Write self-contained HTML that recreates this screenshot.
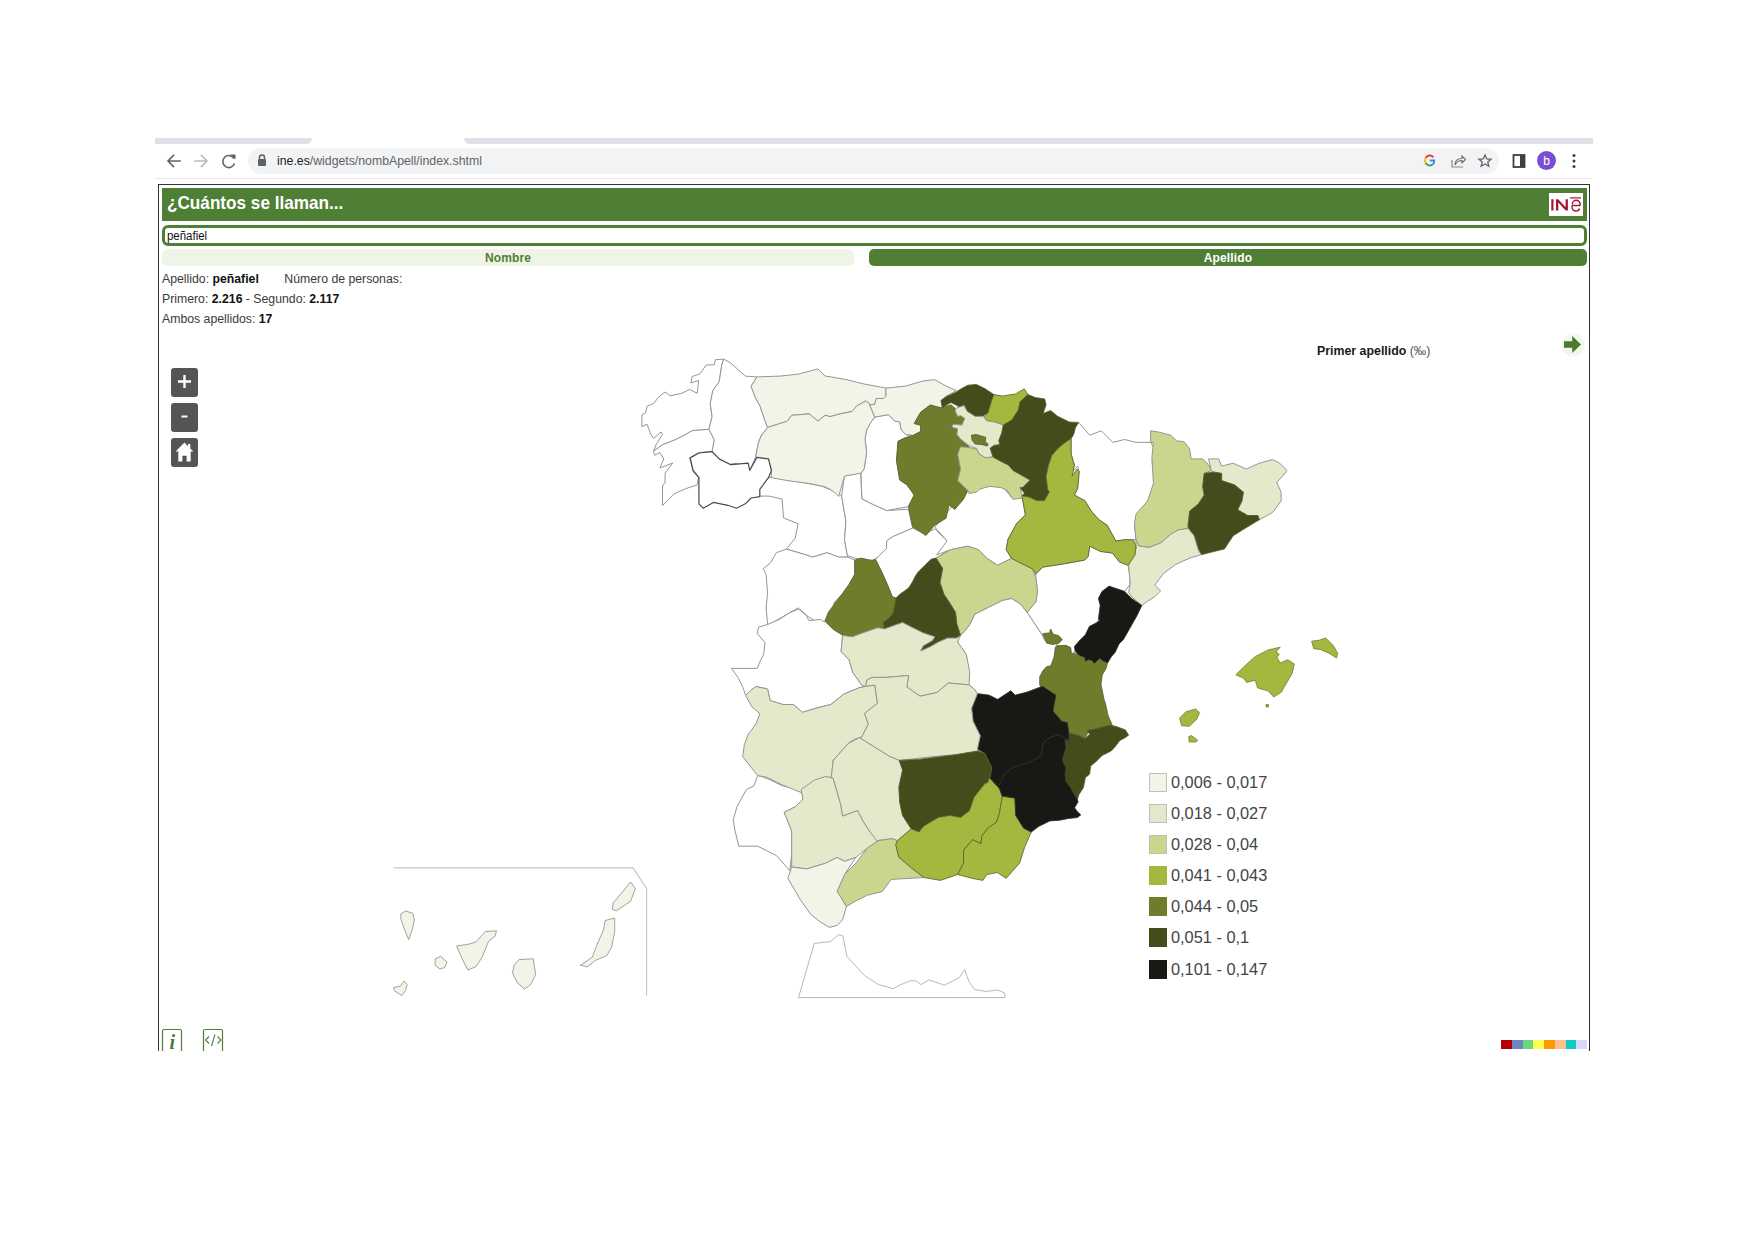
<!DOCTYPE html>
<html><head><meta charset="utf-8">
<style>
html,body{margin:0;padding:0;background:#fff;}
body{width:1754px;height:1240px;position:relative;overflow:hidden;font-family:"Liberation Sans",sans-serif;}
.abs{position:absolute;}
.tabbar{left:155px;top:138px;height:6px;background:#dee1e6;}
.sep{left:155px;top:178px;width:1437px;height:1px;background:#e3e6ea;}
.pill{left:248px;top:148px;width:1251px;height:26px;background:#f1f3f4;border-radius:13px;}
.url{left:276.5px;top:152px;font-size:13px;color:#5f6368;line-height:18px;transform:scaleX(0.945);transform-origin:0 0;white-space:nowrap;}
.url b{font-weight:normal;color:#202124;}
.frame{left:158px;top:184px;width:1432px;height:867px;border:1px solid #333;border-bottom:none;box-sizing:border-box;}
.header{left:162px;top:188px;width:1425px;height:33px;background:#4f7f34;}
.title{left:166.5px;top:191px;font-size:19px;font-weight:bold;color:#fff;line-height:24px;transform:scaleX(0.903);transform-origin:0 0;white-space:nowrap;}
.logo{left:1549px;top:193px;width:34px;height:23px;background:#fff;}
.input{left:162px;top:225px;width:1425px;height:21px;border:3px solid #4f7f34;border-radius:6px;box-sizing:border-box;}
.inputtxt{left:166.5px;top:229px;font-size:12px;color:#111;line-height:14px;transform:scaleX(0.955);transform-origin:0 0;}
.tabN{left:162px;top:249px;width:692px;height:17px;background:#eef5e6;border-radius:5px;}
.tabA{left:869px;top:249px;width:718px;height:17px;background:#4f7f34;border-radius:5px;}
.tabtxt{font-size:12px;font-weight:bold;line-height:17px;text-align:center;top:250px;letter-spacing:0.15px;}
.info{left:162px;font-size:12px;color:#3a3a3a;line-height:16px;transform:scaleX(1.022);transform-origin:0 0;white-space:nowrap;}
.info b{color:#111;}
.zbtn{left:171px;width:27px;height:29px;background:#555;border-radius:3px;color:#fff;}
.legtxt{left:1171px;font-size:16.5px;color:#444;line-height:18px;transform:translateY(0.2px) scaleX(0.99);transform-origin:0 0;white-space:nowrap;}
.sw{left:1149px;width:18px;height:19px;box-sizing:border-box;border:1px solid #c0c0b8;}
.map{position:absolute;left:0;top:0;}
</style></head><body>
<div class="abs tabbar" style="width:157px;border-bottom-right-radius:6px"></div>
<div class="abs tabbar" style="left:464px;width:1129px;border-bottom-left-radius:6px"></div>
<div class="abs sep"></div>
<div class="abs pill"></div>
<!-- nav icons -->
<svg class="abs" style="left:160px;top:148px" width="90" height="26" viewBox="0 0 90 26">
 <g fill="none" stroke-width="1.6" stroke-linecap="square">
  <path d="M20 13 H8.5 M13.5 7.5 L8 13 L13.5 18.5" stroke="#5f6368"/>
  <path d="M35 13 H46.5 M41.5 7.5 L47 13 L41.5 18.5" stroke="#b8babd"/>
  <path d="M74 10.5 A6 6 0 1 0 74.5 15.5" stroke="#5f6368" stroke-linecap="butt"/>
 </g>
 <path d="M70.5 6.5 L75.5 6.5 L75.5 11.5 Z" fill="#5f6368"/>
</svg>
<svg class="abs" style="left:256px;top:153px" width="12" height="14" viewBox="0 0 12 14">
 <path d="M3.5 6 V4.5 A2.5 2.5 0 0 1 8.5 4.5 V6" fill="none" stroke="#5f6368" stroke-width="1.5"/>
 <rect x="2" y="6" width="8" height="7" rx="1" fill="#5f6368"/>
</svg>
<div class="abs url"><b>ine.es</b>/widgets/nombApell/index.shtml</div>
<!-- right icons -->
<svg class="abs" style="left:1420px;top:148px" width="170" height="26" viewBox="0 0 170 26">
 <g fill="none" stroke-width="1.9">
  <path d="M13.4 9.3 A4.6 4.6 0 0 0 5.6 10.2" stroke="#ea4335"/>
  <path d="M5.6 10.2 A4.6 4.6 0 0 0 5.6 14.8" stroke="#fbbc05"/>
  <path d="M5.6 14.8 A4.6 4.6 0 0 0 12.9 16.3" stroke="#34a853"/>
  <path d="M12.9 16.3 A4.6 4.6 0 0 0 14.2 12.5 H9.8" stroke="#4285f4"/>
 </g>
 <g fill="none" stroke="#5f6368" stroke-width="1.3">
  <path d="M32 12 V19 H43" stroke="#8a8d91" stroke-width="1.2"/>
  <path d="M35 17 C35 12 38 10.5 42 10.5 V8 L45.5 11.5 L42 15 V12.5 C39 12.5 36.5 14 35 17 Z" stroke="#6a6d71" stroke-width="1.1"/>
  <path d="M65 7 L66.8 11 L71 11.3 L67.8 14 L68.8 18.2 L65 16 L61.2 18.2 L62.2 14 L59 11.3 L63.2 11 Z"/>
 </g>
 <rect x="93.5" y="7" width="11" height="12" fill="none" stroke="#3c4043" stroke-width="1.8"/>
 <rect x="100" y="7" width="4.5" height="12" fill="#3c4043"/>
 <circle cx="126.5" cy="12.5" r="9.5" fill="#7a4fcf"/>
 <text x="126.5" y="17" font-size="12" fill="#fff" text-anchor="middle" font-family="Liberation Sans">b</text>
 <circle cx="154" cy="7.5" r="1.5" fill="#3c4043"/><circle cx="154" cy="13" r="1.5" fill="#3c4043"/><circle cx="154" cy="18.5" r="1.5" fill="#3c4043"/>
</svg>
<div class="abs frame"></div>
<div class="abs header"></div>
<div class="abs title">¿Cuántos se llaman...</div>
<div class="abs logo"></div>
<svg class="abs" style="left:1549px;top:193px" width="34" height="23" viewBox="0 0 34 23">
 <rect x="2.3" y="6.2" width="2.2" height="11.3" fill="#a3173a"/>
 <path d="M7 17.5 V6.2 H9.2 L16.6 14 V6.2 H18.9 V17.5 H16.7 L9.3 9.6 V17.5 Z" fill="#a3173a"/>
 <path d="M31.3 12.6 H23.3 A3.9 3.9 0 0 0 30.6 15.6 M23.3 11.3 A3.9 3.9 0 0 1 31.2 11.3 V12.6" fill="none" stroke="#a3173a" stroke-width="1.5"/>
 <rect x="21" y="4.3" width="11" height="1.2" fill="#a3173a"/>
</svg>
<div class="abs input"></div>
<div class="abs inputtxt">peñafiel</div>
<div class="abs tabN"></div>
<div class="abs tabA"></div>
<div class="abs tabtxt" style="left:162px;width:692px;color:#4f7f34">Nombre</div>
<div class="abs tabtxt" style="left:869px;width:718px;color:#fff">Apellido</div>
<div class="abs info" style="top:271px">Apellido: <b>peñafiel</b><span style="display:inline-block;width:25px"></span>Número de personas:</div>
<div class="abs info" style="top:291px">Primero: <b>2.216</b> - Segundo: <b>2.117</b></div>
<div class="abs info" style="top:311px">Ambos apellidos: <b>17</b></div>
<div class="abs" style="left:1317px;top:343px;font-size:12px;font-weight:bold;color:#1a1a1a;line-height:16px;transform:scaleX(1.03);transform-origin:0 0;white-space:nowrap">Primer apellido <span style="font-weight:normal;color:#555">(‰)</span></div>
<svg class="abs" style="left:1559px;top:331px" width="28" height="28" viewBox="0 0 28 28">
 <circle cx="14" cy="14" r="11.5" fill="#f1f7ec"/>
 <path d="M5 10.3 H13.2 V5 L22 13.5 L13.2 22 V16.7 H5 Z" fill="#4a7a2e"/>
</svg>
<!-- zoom buttons -->
<div class="abs zbtn" style="top:368px"></div>
<div class="abs zbtn" style="top:403px"></div>
<div class="abs zbtn" style="top:438px"></div>
<svg class="abs" style="left:171px;top:368px" width="27" height="100" viewBox="0 0 27 100">
 <path d="M13.5 7 V20 M7 13.5 H20" stroke="#fff" stroke-width="2.4"/>
 <path d="M10.5 48.5 H16.5" stroke="#fff" stroke-width="2"/>
 <path d="M13.5 74.6 L4.6 83.6 H7.3 V93.4 H11.4 V87.8 H15.6 V93.4 H19.7 V83.6 H22.4 L19.3 80.5 V76 H17 V78.2 Z" fill="#fff"/>
</svg>
<svg class="map" width="1754" height="1240" viewBox="0 0 1754 1240">
<g stroke-linejoin="round" fill-rule="evenodd">
<polygon points="723.7,359.1 715.4,359.7 714.1,364.9 706.3,364.9 699.9,373.9 692.2,376.5 690.9,383.0 698.6,380.4 697.3,393.3 689.6,389.4 681.8,393.3 670.2,395.8 665.1,392.0 658.6,397.1 653.5,403.6 647.0,406.2 645.7,412.6 641.9,415.2 641.9,426.8 647.0,424.2 650.9,434.5 653.5,438.4 661.2,431.9 662.5,434.5 656.0,444.8 653.5,451.3 662.5,444.8 675.4,439.7 685.7,434.5 692.2,430.6 708.9,429.4 712.1,416.5 710.2,403.6 712.8,390.7 719.2,381.7 721.8,364.9" fill="#ffffff" stroke="#969696" stroke-width="1.0"/>
<polygon points="723.7,359.1 730.8,363.0 745.3,376.1 756.9,376.9 751.1,386.3 755.5,397.9 760.0,406.0 764.6,419.6 767.5,427.5 761.0,436.0 758.4,442.9 755.5,457.4 749.7,470.5 736.6,463.2 727.9,464.7 719.2,459.0 712.1,451.3 714.1,439.7 708.9,429.4 712.1,416.5 710.2,403.6 712.8,390.7 719.2,381.7 721.8,364.9" fill="#ffffff" stroke="#969696" stroke-width="1.0"/>
<polygon points="653.5,451.3 662.5,444.8 675.4,439.7 685.7,434.5 692.2,430.6 708.9,429.4 714.1,439.7 712.1,451.3 698.6,452.6 689.6,457.7 693.4,471.9 698.6,477.1 697.3,484.8 685.7,488.7 674.1,493.8 662.5,505.4 662.5,486.1 665.1,482.2 665.1,473.2 672.8,462.9 659.9,468.0 663.8,459.0 659.9,452.6 654.8,455.1" fill="#ffffff" stroke="#969696" stroke-width="1.0"/>
<polygon points="1078.4,422.4 1089.7,435.2 1101.3,430.8 1112.9,442.4 1124.5,439.5 1136.1,442.4 1150.6,442.4 1155.0,449.7 1152.1,461.3 1155.0,478.7 1150.6,496.1 1143.4,507.7 1136.1,516.4 1134.7,526.6 1136.1,539.7 1133.2,539.7 1124.5,539.7 1115.8,541.1 1107.1,525.1 1098.4,519.3 1091.3,511.1 1084.8,500.6 1080.0,498.2 1074.4,495.0 1077.6,488.5 1079.2,471.6 1077.6,466.0 1072.7,471.6 1074.4,465.2 1071.1,453.9 1071.1,438.5 1073.5,434.5 1075.2,428.1" fill="#ffffff" stroke="#969696" stroke-width="1.0"/>
<polygon points="874.7,417.1 888.4,414.7 894.8,421.1 899.7,421.9 901.3,430.0 906.1,434.8 912.6,435.6 904.5,438.1 898.0,441.3 896.5,460.6 899.7,480.0 906.9,484.8 914.2,495.0 908.4,506.6 886.6,510.6 873.5,504.8 861.9,499.0 861.0,473.5 864.2,468.7 866.6,452.6 865.0,438.9 866.6,430.0 870.6,422.7" fill="#ffffff" stroke="#969696" stroke-width="1.0"/>
<polygon points="771.9,477.3 798.1,481.6 821.3,486.0 838.7,493.2 841.6,496.1 845.9,520.8 844.5,539.7 847.4,555.6 847.4,557.1 838.7,557.1 827.1,552.7 812.6,557.1 803.9,554.2 786.4,549.1 795.2,538.2 798.1,523.7 783.5,517.9 782.1,499.0 769.0,496.1 758.9,496.1 758.9,488.9 769.0,477.3" fill="#ffffff" stroke="#969696" stroke-width="1.0"/>
<polygon points="841.6,496.1 844.5,475.8 860.5,472.9 861.9,499.0 873.5,504.8 886.6,510.6 908.4,509.2 912.7,528.1 892.4,536.8 886.6,541.1 886.6,548.4 877.9,557.1 873.5,560.0 864.8,560.0 856.1,558.5 847.4,555.6 844.5,539.7 845.9,520.8" fill="#ffffff" stroke="#969696" stroke-width="1.0"/>
<polygon points="786.4,549.1 803.9,554.2 812.6,557.1 827.1,552.7 838.7,557.1 847.4,557.1 854.7,560.0 854.7,574.5 848.9,584.7 841.6,594.8 834.3,602.1 832.9,609.3 828.5,612.2 824.2,622.4 816.9,622.4 808.2,616.6 798.1,607.9 780.6,618.0 767.6,625.3 764.7,626.7 767.6,623.8 766.1,607.9 767.6,593.4 766.1,574.5 763.2,568.7 770.5,562.9 776.3,552.7" fill="#ffffff" stroke="#969696" stroke-width="1.0"/>
<polygon points="875.5,559.4 879.3,555.6 886.6,548.4 886.6,541.1 892.4,536.8 912.7,528.1 924.4,534.0 934.8,528.8 947.0,541.0 952.2,547.9 936.1,558.1 931.0,559.4 924.5,565.8 918.1,572.3 915.5,576.1 912.9,581.3 909.0,587.7 903.9,591.6 900.0,594.2 896.1,598.1 892.3,596.8 887.1,583.9 881.9,572.3" fill="#ffffff" stroke="#969696" stroke-width="1.0"/>
<polygon points="957.5,480.0 976.6,487.0 995.8,485.2 1004.5,488.7 1011.5,497.4 1021.9,495.7 1025.4,514.8 1016.7,523.5 1008.0,539.2 1006.2,549.7 1011.5,558.4 997.5,565.3 987.1,558.4 978.4,549.7 967.9,546.2 950.5,549.7 936.6,554.9 947.0,541.0 934.8,527.0 943.5,516.6 952.2,506.1 967.9,490.4" fill="#ffffff" stroke="#969696" stroke-width="1.0"/>
<polygon points="1035.8,574.0 1042.8,567.1 1065.4,563.6 1084.6,560.1 1088.1,556.6 1089.8,546.2 1100.3,551.4 1112.5,553.1 1119.4,561.9 1128.1,565.3 1129.9,575.8 1129.9,584.5 1124.7,591.5 1109.0,586.2 1102.0,591.5 1098.5,598.4 1100.3,605.4 1098.5,619.3 1097.1,622.6 1089.4,626.5 1085.5,634.8 1079.0,641.3 1074.5,646.5 1075.2,651.0 1071.3,654.2 1070.6,647.7 1066.1,645.5 1057.7,645.8 1055.2,647.7 1041.1,633.3 1027.1,612.4 1035.8,601.9 1037.6,591.5 1035.8,577.5" fill="#ffffff" stroke="#969696" stroke-width="1.0"/>
<polygon points="731.5,668.4 741.8,668.4 757.3,668.4 759.8,661.9 763.7,654.2 765.0,642.6 757.3,633.5 758.5,627.1 767.6,624.5 779.2,619.4 789.5,612.9 798.5,609.0 806.3,615.5 808.9,620.6 820.5,619.4 824.4,621.9 825.2,621.3 832.9,629.0 843.2,635.5 842.4,637.4 841.1,651.6 848.9,659.4 852.7,672.3 861.8,685.2 865.6,686.5 859.2,687.7 843.7,694.2 830.8,704.5 815.3,708.4 802.4,712.3 793.4,704.5 783.1,704.5 770.2,700.6 767.6,689.0 756.0,686.5 750.8,690.3 745.6,695.5 743.1,687.7 737.9,677.4" fill="#ffffff" stroke="#969696" stroke-width="1.0"/>
<polygon points="761.5,776.4 770.9,780.2 782.3,785.8 801.1,789.6 803.0,799.1 795.5,806.6 784.2,812.3 791.7,831.1 791.7,853.8 789.8,870.8 776.6,855.7 757.7,846.2 738.9,846.2 735.1,831.1 733.2,819.8 737.0,806.6 746.4,789.6 754.0,785.8 757.7,775.5" fill="#ffffff" stroke="#969696" stroke-width="1.0"/>
<polygon points="969.7,624.5 974.9,614.1 988.8,607.1 1002.8,600.2 1011.5,598.4 1020.2,603.6 1027.1,612.4 1041.1,633.3 1044.5,640.2 1049.8,643.7 1058.5,643.7 1056.7,643.7 1055.8,647.3 1054.4,654.5 1051.4,664.7 1044.2,669.0 1039.8,676.3 1042.7,686.4 1038.4,687.9 1026.8,692.3 1015.2,695.2 1010.8,690.8 997.7,699.5 989.0,695.2 977.4,693.7 974.5,689.4 967.3,683.5 968.7,671.9 966.2,654.2 957.5,642.0 959.2,635.0 964.4,631.5" fill="#ffffff" stroke="#969696" stroke-width="1.0"/>
<polygon points="756.9,376.9 780.1,376.1 799.0,374.0 817.9,368.9 825.1,376.1 830.0,376.7 848.0,380.0 864.2,384.0 886.0,388.1 886.0,396.1 883.5,398.5 876.3,398.5 874.7,404.2 869.8,405.0 869.0,403.4 865.8,401.0 856.9,405.8 852.1,411.5 840.0,413.9 830.0,416.6 825.1,415.3 817.9,421.1 809.2,413.9 791.7,415.3 787.4,421.1 767.5,427.5 764.6,419.6 760.0,406.0 755.5,397.9 751.1,386.3" fill="#f1f4e6" stroke="#969696" stroke-width="1.0"/>
<polygon points="767.5,427.5 787.4,421.1 791.7,415.3 809.2,413.9 817.9,421.1 825.1,415.3 830.0,416.6 840.0,413.9 852.1,411.5 856.9,405.8 865.8,401.0 869.0,403.4 869.8,405.0 874.7,417.1 870.6,422.7 866.6,430.0 865.0,438.9 866.6,452.6 864.2,468.7 861.0,473.5 860.5,473.2 844.5,476.1 838.7,496.4 835.8,493.5 830.0,489.2 823.7,486.4 809.2,483.5 787.4,480.6 771.4,477.7 771.4,470.5 768.5,458.9 756.9,457.4 755.5,457.4 758.4,442.9 761.0,436.0" fill="#f1f4e6" stroke="#969696" stroke-width="1.0"/>
<polygon points="886.0,388.1 905.5,386.1 922.9,381.0 934.5,379.6 946.1,386.1 956.3,390.5 946.1,396.3 941.8,400.6 943.2,406.4 940.0,408.2 930.3,405.0 920.6,412.3 914.2,423.5 920.6,425.2 920.6,431.6 912.6,435.6 910.2,434.8 906.1,434.8 901.3,430.0 899.7,421.9 894.8,421.1 888.4,414.7 874.7,417.1 869.8,405.0 874.7,404.2 876.3,398.5 883.5,398.5 886.0,396.1" fill="#f1f4e6" stroke="#969696" stroke-width="1.0"/>
<polygon points="898.0,441.3 904.5,438.1 912.6,435.6 920.6,431.6 920.6,425.2 914.2,423.5 920.6,412.3 930.3,405.0 940.9,407.7 951.0,404.8 955.4,408.4 955.4,411.3 957.6,416.4 960.5,415.6 964.8,418.5 961.9,425.1 953.2,424.3 951.8,427.2 957.6,428.7 956.9,434.5 960.5,438.9 967.7,444.7 969.2,447.6 960.5,446.8 957.7,454.3 960.6,468.9 957.7,480.5 967.9,490.6 963.5,499.3 954.8,509.5 949.0,505.1 946.1,518.2 934.5,525.5 925.8,535.6 920.0,531.3 912.7,526.9 908.4,506.6 914.2,495.0 906.9,484.8 899.7,480.0 896.5,460.6" fill="#6e7d2c" stroke="#55602f" stroke-width="0.8"/>
<polygon points="940.9,400.4 946.0,396.8 955.4,392.4 961.2,388.8 967.7,385.2 976.4,384.4 985.2,388.8 993.9,394.6 991.7,400.4 989.5,407.7 988.1,412.7 982.2,416.4 975.0,416.4 967.0,411.3 964.1,405.5 960.5,407.7 956.9,405.5 951.0,402.6 948.1,404.0 942.3,407.7" fill="#434d1b" stroke="#55602f" stroke-width="0.8"/>
<polygon points="993.9,394.6 1002.6,396.0 1015.6,393.9 1024.3,388.8 1028.0,394.6 1020.0,401.9 1018.5,409.8 1012.0,420.0 1003.3,425.1 995.3,422.2 986.6,420.7 983.7,417.1 988.1,412.7 989.5,407.7 991.7,400.4" fill="#a4b840" stroke="#55602f" stroke-width="0.8"/>
<polygon points="955.4,408.4 964.1,405.5 967.0,411.3 975.0,416.4 982.2,416.4 983.7,417.1 986.6,420.7 995.3,422.2 1003.3,425.1 1001.8,433.1 998.9,440.3 999.7,444.7 993.9,445.4 990.2,448.3 993.1,457.0 985.2,457.7 979.3,454.1 976.4,448.3 971.4,446.8 967.7,444.7 960.5,438.9 956.9,434.5 957.6,428.7 951.8,427.2 953.2,424.3 961.9,425.1 964.8,418.5 960.5,415.6 957.6,416.4 955.4,411.3" fill="#e3eacb" stroke="#969696" stroke-width="1.0"/>
<polygon points="960.5,446.8 969.2,447.6 976.4,449.0 979.3,454.1 985.2,457.7 993.1,457.0 1001.1,461.4 1008.4,465.0 1012.9,470.3 1020.0,474.3 1030.2,480.1 1022.9,487.4 1020.1,487.7 1023.0,497.9 1012.9,499.3 1007.1,490.6 1001.3,487.7 989.7,486.3 979.5,489.2 976.6,492.1 969.3,493.5 967.9,490.6 957.7,480.5 960.6,468.9 957.7,454.3" fill="#c8d68e" stroke="#969696" stroke-width="1.0"/>
<polygon points="1028.0,394.6 1031.6,396.0 1035.2,397.5 1044.7,398.9 1046.1,404.7 1043.2,413.4 1050.5,410.5 1057.7,416.3 1069.3,422.1 1078.4,422.4 1075.2,428.1 1073.5,434.5 1071.1,438.5 1063.9,443.4 1058.2,448.2 1051.8,455.5 1048.5,465.2 1046.1,476.5 1047.7,489.4 1049.4,491.8 1044.5,500.6 1036.5,500.6 1030.0,497.4 1021.9,495.7 1024.4,493.2 1020.1,487.7 1022.9,487.4 1030.2,480.1 1020.0,474.3 1012.9,470.3 1008.4,465.0 1001.1,461.4 993.1,457.0 990.2,448.3 993.9,445.4 999.7,444.7 998.9,440.3 1001.8,433.1 1003.3,425.1 1012.0,420.0 1018.5,409.8 1020.0,401.9" fill="#434d1b" stroke="#55602f" stroke-width="0.8"/>
<polygon points="1150.6,430.8 1159.3,432.2 1170.9,435.2 1176.7,441.0 1183.9,441.5 1189.7,448.7 1191.1,458.9 1202.7,458.9 1208.5,464.7 1211.4,470.5 1204.2,473.4 1202.7,486.4 1204.2,495.2 1198.4,503.9 1189.7,511.1 1188.2,524.2 1188.2,528.5 1178.1,530.0 1170.8,534.3 1160.6,543.0 1149.0,547.4 1138.9,546.0 1136.0,540.1 1134.5,524.2 1136.0,514.0 1147.6,501.0 1153.4,483.5 1151.9,457.4 1153.4,442.4 1150.6,442.4" fill="#c8d68e" stroke="#969696" stroke-width="1.0"/>
<polygon points="1208.5,458.9 1218.7,458.9 1221.6,466.1 1233.2,463.2 1246.3,469.0 1259.3,463.2 1272.4,459.6 1279.7,463.2 1286.9,470.5 1282.6,476.3 1276.7,482.1 1281.1,492.2 1281.1,501.0 1272.4,512.6 1259.3,519.8 1257.9,515.5 1247.7,515.5 1237.6,509.7 1241.9,501.0 1243.4,492.2 1234.7,485.0 1221.6,480.6 1221.6,473.4 1212.9,471.9 1211.4,470.5" fill="#e3eacb" stroke="#969696" stroke-width="1.0"/>
<polygon points="1204.2,473.4 1212.9,471.9 1221.6,473.4 1221.6,480.6 1234.7,485.0 1243.4,492.2 1241.9,501.0 1237.6,509.7 1247.7,515.5 1257.9,515.5 1259.3,519.8 1244.8,528.5 1233.2,535.8 1224.5,548.9 1212.9,551.8 1201.3,554.7 1198.4,550.3 1194.0,535.8 1188.2,528.5 1188.2,524.2 1189.7,511.1 1198.4,503.9 1204.2,495.2 1202.7,486.4" fill="#434d1b" stroke="#55602f" stroke-width="0.8"/>
<polygon points="1136.0,540.1 1138.9,546.0 1149.0,547.4 1160.6,543.0 1170.8,534.3 1178.1,530.0 1188.2,528.5 1194.0,535.8 1198.4,550.3 1201.3,554.7 1191.1,557.6 1181.0,561.9 1175.2,564.8 1163.5,573.5 1154.8,585.1 1160.6,590.9 1154.8,596.7 1147.6,601.1 1141.8,605.5 1131.6,596.7 1128.7,592.4 1130.2,583.7 1128.7,566.3 1130.2,557.6 1136.0,548.9" fill="#e3eacb" stroke="#969696" stroke-width="1.0"/>
<polygon points="854.7,560.0 861.3,558.1 871.6,560.6 875.5,559.4 881.9,572.3 887.1,583.9 892.3,596.8 896.1,598.1 893.5,612.3 889.7,617.4 883.2,622.6 884.5,629.0 878.1,627.7 862.6,632.9 852.3,636.8 843.2,635.5 832.9,629.0 825.2,621.3 828.5,612.2 835.8,602.1 841.6,594.8 848.9,584.7 854.7,574.5" fill="#6e7d2c" stroke="#55602f" stroke-width="0.8"/>
<polygon points="936.1,558.1 950.5,549.7 967.9,546.2 978.4,549.7 987.1,558.4 997.5,565.3 1011.5,558.4 1018.4,561.9 1032.4,568.8 1035.8,577.5 1037.6,591.5 1035.8,601.9 1027.1,612.4 1020.2,603.6 1011.5,598.4 1002.8,600.2 988.8,607.1 974.9,614.1 969.7,624.5 964.4,631.5 960.6,635.5 956.8,623.9 955.5,612.3 949.0,601.9 943.9,594.2 940.0,582.6 942.6,568.4" fill="#c8d68e" stroke="#969696" stroke-width="1.0"/>
<polygon points="936.1,558.1 942.6,568.4 940.0,582.6 943.9,594.2 949.0,601.9 955.5,612.3 956.8,623.9 960.6,635.5 956.8,638.1 947.7,638.1 938.7,641.9 929.7,647.1 920.6,651.0 923.2,645.8 932.3,640.6 934.8,636.8 923.2,632.9 910.3,626.5 902.6,622.6 894.8,625.2 884.5,629.0 883.2,622.6 889.7,617.4 893.5,612.3 896.1,598.1 900.0,594.2 903.9,591.6 909.0,587.7 912.9,581.3 915.5,576.1 918.1,572.3 924.5,565.8 931.0,559.4" fill="#434d1b" stroke="#55602f" stroke-width="0.8"/>
<polygon points="1071.1,438.5 1071.1,453.9 1074.4,465.2 1072.0,476.0 1077.0,469.0 1079.2,471.6 1078.5,480.0 1077.6,488.5 1074.4,495.0 1080.0,498.2 1084.8,500.6 1091.3,511.1 1098.4,519.3 1107.1,525.1 1115.8,541.1 1124.5,539.7 1133.2,539.7 1136.0,546.0 1135.1,554.9 1128.1,565.3 1119.4,561.9 1112.5,553.1 1100.3,551.4 1089.8,546.2 1088.1,556.6 1084.6,560.1 1065.4,563.6 1042.8,567.1 1035.8,574.0 1032.4,568.8 1018.4,561.9 1011.5,558.4 1006.2,549.7 1008.0,539.2 1016.7,523.5 1025.4,514.8 1021.9,495.7 1030.0,497.4 1036.5,500.6 1044.5,500.6 1049.4,491.8 1047.7,489.4 1046.1,476.5 1048.5,465.2 1051.8,455.5 1058.2,448.2 1063.9,443.4" fill="#a4b840" stroke="#55602f" stroke-width="0.8"/>
<polygon points="1102.0,591.5 1109.0,586.2 1124.7,591.5 1131.6,598.4 1141.8,605.5 1136.9,615.8 1129.4,629.0 1123.5,639.4 1119.0,643.9 1115.2,652.3 1111.3,656.8 1107.4,663.2 1102.9,661.3 1099.7,658.7 1094.5,663.9 1091.3,660.6 1088.1,660.0 1085.5,661.9 1084.2,657.4 1079.7,656.1 1075.2,651.0 1074.5,646.5 1079.0,641.3 1085.5,634.8 1089.4,626.5 1097.1,622.6 1099.7,620.0 1098.5,619.3 1100.3,605.4 1098.5,598.4" fill="#161914" stroke="#2b2f25" stroke-width="0.8"/>
<polygon points="1055.2,647.7 1057.7,645.8 1066.1,645.5 1070.6,647.7 1071.3,654.2 1075.2,652.9 1079.7,656.1 1084.2,657.4 1085.5,661.9 1088.1,660.0 1091.3,660.6 1094.5,663.9 1099.7,658.7 1102.9,661.3 1107.4,663.2 1106.1,668.4 1102.3,674.8 1101.0,684.5 1104.2,700.0 1105.2,702.4 1108.1,715.5 1112.4,725.6 1108.1,727.1 1096.4,728.5 1087.7,732.9 1084.8,738.7 1076.1,734.4 1068.9,734.4 1067.4,722.7 1061.6,721.3 1052.9,711.1 1055.8,695.2 1041.0,688.4 1039.7,684.5 1039.7,677.4 1042.9,671.0 1046.8,666.5 1050.6,666.5 1052.6,661.9 1054.5,657.4" fill="#6e7d2c" stroke="#55602f" stroke-width="0.8"/>
<polygon points="1069.3,733.3 1077.3,735.1 1084.8,738.7 1089.7,734.2 1087.0,730.6 1095.0,728.9 1109.2,725.3 1115.4,726.2 1125.2,729.8 1128.7,735.1 1125.2,737.7 1119.9,740.4 1114.5,747.5 1111.0,751.1 1102.1,755.5 1095.9,761.7 1090.6,766.1 1089.7,774.1 1085.3,777.7 1083.5,787.4 1079.0,794.5 1077.3,799.9 1070.2,787.4 1065.7,781.2 1064.8,775.0 1065.7,767.9 1063.1,762.6 1062.2,759.0 1065.7,748.4 1064.8,739.5 1068.9,740.2" fill="#434d1b" stroke="#55602f" stroke-width="0.8"/>
<polygon points="977.4,693.7 989.0,695.2 997.7,699.5 1010.8,690.8 1015.2,695.2 1026.8,692.3 1038.4,687.9 1042.7,686.4 1055.8,695.2 1052.9,711.1 1061.6,721.3 1067.4,722.7 1068.9,734.4 1068.9,740.2 1058.7,734.4 1047.1,738.7 1042.7,744.5 1041.3,756.1 1029.7,761.9 1012.3,767.7 1005.0,773.5 999.2,785.2 989.0,783.7 991.9,767.7 984.7,753.2 977.4,748.9 980.3,735.8 973.1,721.3 971.6,708.2" fill="#161914" stroke="#2b2f25" stroke-width="0.8"/>
<polygon points="842.4,637.4 843.2,635.5 852.3,636.8 862.6,632.9 878.1,627.7 884.5,629.0 894.8,625.2 902.6,622.6 910.3,626.5 923.2,632.9 934.8,636.8 932.3,640.6 923.2,645.8 920.6,651.0 929.7,647.1 938.7,641.9 947.7,638.1 956.8,638.1 960.6,635.5 957.5,642.0 966.2,654.2 969.7,671.6 969.1,684.9 948.3,683.0 937.0,692.5 920.0,696.2 906.8,686.8 908.7,675.5 886.0,677.4 872.1,677.4 866.9,680.0 865.6,686.5 861.8,685.2 852.7,672.3 848.9,659.4 841.1,651.6" fill="#e3eacb" stroke="#969696" stroke-width="1.0"/>
<polygon points="865.6,686.5 866.9,680.0 872.1,677.4 886.0,677.4 908.7,675.5 906.8,686.8 920.0,696.2 937.0,692.5 948.3,683.0 969.1,684.9 974.5,689.4 977.4,693.7 971.6,708.2 973.1,721.3 980.3,735.8 977.4,748.9 978.5,750.9 955.8,754.7 933.2,756.6 899.2,760.4 889.8,756.6 859.6,737.7 861.8,736.8 868.2,723.9 864.4,713.5 877.3,703.2 874.7,685.2" fill="#e3eacb" stroke="#969696" stroke-width="1.0"/>
<polygon points="745.6,695.5 750.8,690.3 756.0,686.5 767.6,689.0 770.2,700.6 783.1,704.5 793.4,704.5 802.4,712.3 815.3,708.4 830.8,704.5 843.7,694.2 859.2,687.7 865.6,686.5 874.7,685.2 877.3,703.2 864.4,713.5 868.2,723.9 861.8,736.8 854.0,739.4 848.3,743.4 833.2,760.4 831.3,777.4 823.8,777.4 814.3,784.9 801.1,792.5 782.3,784.9 767.2,777.4 757.7,775.5 742.6,756.6 744.4,744.5 748.2,734.2 756.0,723.9 759.8,713.5 752.1,707.1" fill="#e3eacb" stroke="#969696" stroke-width="1.0"/>
<polygon points="801.1,789.6 814.3,780.2 825.7,776.4 833.2,778.3 840.8,804.7 842.6,816.0 857.7,810.4 863.4,821.7 870.9,833.0 878.5,840.6 867.2,848.1 855.8,857.5 844.5,861.3 837.0,857.5 825.7,863.2 806.8,868.9 791.7,867.0 791.7,853.8 791.7,831.1 784.2,812.3 795.5,806.6 803.0,799.1" fill="#e3eacb" stroke="#969696" stroke-width="1.0"/>
<polygon points="833.2,778.3 831.3,777.4 833.2,760.4 848.3,743.4 859.6,737.7 889.8,756.6 899.2,760.4 902.6,770.0 898.9,787.0 899.7,802.0 902.6,815.5 911.3,829.0 906.5,832.9 897.4,840.6 891.7,838.7 876.6,840.6 870.9,833.0 863.4,821.7 857.7,810.4 842.6,816.0 840.8,804.7" fill="#e3eacb" stroke="#969696" stroke-width="1.0"/>
<polygon points="899.2,760.4 918.1,759.4 933.2,757.5 955.8,754.7 978.5,750.9 984.7,753.2 991.9,767.7 991.6,770.0 989.4,777.5 987.8,782.6 984.9,783.6 974.2,797.1 969.4,810.7 960.7,817.4 950.0,815.5 938.4,817.4 923.9,826.1 919.0,832.0 911.3,829.0 902.6,815.5 899.7,802.0 898.9,787.0 902.6,770.0" fill="#434d1b" stroke="#55602f" stroke-width="0.8"/>
<polygon points="837.0,891.5 844.5,874.5 855.8,863.2 867.2,848.1 878.5,840.6 891.7,838.7 897.4,840.6 895.8,844.5 898.7,857.1 911.3,867.8 923.9,877.5 891.3,879.4 882.3,891.5 867.2,895.3 855.8,900.9 846.4,906.6 840.8,897.2" fill="#c8d68e" stroke="#969696" stroke-width="1.0"/>
<polygon points="791.7,867.0 806.8,868.9 825.7,863.2 837.0,857.5 844.5,861.3 855.8,857.5 844.5,874.5 837.0,891.5 840.8,897.2 846.4,906.6 842.6,919.8 837.0,925.5 829.4,927.4 820.0,921.7 810.6,914.2 801.1,900.9 795.5,891.5 787.9,878.3" fill="#f1f4e6" stroke="#969696" stroke-width="1.0"/>
<polygon points="895.8,844.5 897.4,840.6 906.5,832.9 911.3,829.0 919.0,832.0 923.9,826.1 938.4,817.4 950.0,815.5 960.7,817.4 969.4,810.7 974.2,797.1 984.9,783.6 987.8,782.6 989.4,777.5 999.4,788.4 1002.3,796.1 999.4,813.6 996.5,822.3 987.8,828.1 982.0,835.8 981.0,843.6 972.3,839.7 963.6,850.3 963.6,862.9 957.8,874.5 940.3,880.4 923.9,877.5 911.3,867.8 898.7,857.1" fill="#a4b840" stroke="#55602f" stroke-width="0.8"/>
<polygon points="1002.3,796.1 1014.9,798.1 1015.8,815.5 1023.6,828.1 1031.3,832.0 1024.6,847.4 1019.7,862.9 1006.2,878.4 997.5,872.6 986.8,874.5 982.9,880.4 972.3,878.4 957.8,874.5 963.6,862.9 963.6,850.3 972.3,839.7 981.0,843.6 982.0,835.8 987.8,828.1 996.5,822.3 999.4,813.6" fill="#a4b840" stroke="#55602f" stroke-width="0.8"/>
<polygon points="999.2,785.2 1005.0,773.5 1012.3,767.7 1029.7,761.9 1041.3,756.1 1042.7,744.5 1047.1,738.7 1058.7,734.4 1068.9,740.2 1064.8,739.5 1065.7,748.4 1062.2,759.0 1063.1,762.6 1065.7,767.9 1064.8,775.0 1065.7,781.2 1070.2,787.4 1077.3,799.9 1078.2,801.6 1074.6,807.8 1077.3,811.4 1080.8,814.9 1077.3,817.6 1068.4,818.5 1059.5,820.3 1049.8,820.9 1038.5,826.6 1031.3,832.0 1023.6,828.1 1015.8,815.5 1014.9,798.1 1002.3,796.1 999.4,788.4 989.4,777.5" fill="#161914" stroke="#2b2f25" stroke-width="0.8"/>
<polygon points="971.4,435.2 976.4,434.5 985.9,437.4 985.2,441.8 988.1,443.9 987.3,446.1 982.2,444.7 975.0,443.9 972.1,440.3" fill="#6e7d2c" stroke="#55602f" stroke-width="0.8"/>
<polygon points="1042.9,633.5 1049.4,632.9 1050.6,629.0 1053.2,634.2 1058.4,635.5 1062.3,639.4 1059.7,642.6 1053.2,644.5 1046.8,643.2 1044.8,638.7" fill="#6e7d2c" stroke="#55602f" stroke-width="0.8"/>
<polygon points="690.2,458.1 698.9,453.0 711.9,451.6 719.2,458.9 730.8,464.7 748.2,463.2 749.7,470.5 756.9,457.4 768.5,458.9 771.4,470.5 768.5,477.7 759.8,489.3 759.8,496.6 751.1,498.0 745.3,503.8 736.6,508.2 727.9,505.3 713.4,502.4 703.2,508.2 698.9,503.8 698.9,492.2 698.9,477.7 693.1,470.5" fill="#ffffff" stroke="#4a4a4a" stroke-width="1.2"/>
<polygon points="400.8,914.1 405.5,910.9 412.7,913.3 414.3,919.7 412.7,928.4 408.7,939.6 404.7,930.0 400.8,918.9" fill="#f1f4e6" stroke="#8c8c8c" stroke-width="0.8"/>
<polygon points="393.6,987.5 400.8,985.9 403.9,981.1 407.1,984.3 405.5,990.7 401.6,995.5 394.4,990.7" fill="#f1f4e6" stroke="#8c8c8c" stroke-width="0.8"/>
<polygon points="435.1,958.8 440.7,956.4 447.0,962.0 444.7,967.5 439.9,969.1 435.1,965.2" fill="#f1f4e6" stroke="#8c8c8c" stroke-width="0.8"/>
<polygon points="456.6,946.0 467.8,944.4 475.8,942.0 485.4,931.6 496.5,930.8 494.9,936.4 488.6,941.2 482.2,957.2 475.8,966.8 467.8,970.0 461.4,957.2" fill="#f1f4e6" stroke="#8c8c8c" stroke-width="0.8"/>
<polygon points="518.9,959.6 533.3,958.8 535.6,974.7 530.9,984.3 524.5,989.1 517.3,982.7 512.5,973.1 514.1,965.2" fill="#f1f4e6" stroke="#8c8c8c" stroke-width="0.8"/>
<polygon points="605.1,920.5 614.7,918.1 614.7,931.6 611.5,947.6 606.7,955.6 595.5,960.4 587.5,966.8 580.3,965.2 592.3,957.2 597.1,944.4 603.5,930.0" fill="#f1f4e6" stroke="#8c8c8c" stroke-width="0.8"/>
<polygon points="613.1,902.9 622.7,891.7 630.6,882.1 635.4,888.5 630.6,901.3 616.3,910.9 612.3,909.3" fill="#f1f4e6" stroke="#8c8c8c" stroke-width="0.8"/>
<polygon points="1235.8,674.8 1244.5,666.2 1255.3,656.4 1268.3,649.9 1280.2,647.2 1275.9,652.1 1279.2,654.2 1277.0,657.5 1280.2,662.9 1287.8,659.7 1294.3,664.0 1292.1,673.7 1285.6,684.6 1281.3,692.2 1273.7,697.0 1268.3,691.1 1257.5,687.8 1255.3,680.2 1246.7,682.4 1243.4,678.1" fill="#a4b840" stroke="#6d7d2a" stroke-width="0.8"/>
<polygon points="1311.6,641.2 1319.2,640.2 1325.7,638.0 1333.3,645.6 1337.6,653.2 1336.6,658.0 1329.0,653.2 1320.3,649.4 1313.8,648.8" fill="#a4b840" stroke="#6d7d2a" stroke-width="0.8"/>
<polygon points="1179.5,718.2 1186.0,711.7 1195.7,709.0 1199.5,712.7 1196.8,719.2 1189.2,726.3 1181.7,725.7" fill="#a4b840" stroke="#6d7d2a" stroke-width="0.8"/>
<polygon points="1188.7,736.6 1191.4,735.5 1197.9,740.4 1195.7,742.0 1189.2,742.0" fill="#a4b840" stroke="#6d7d2a" stroke-width="0.8"/>
<polygon points="1266.0,704.5 1268.5,704.5 1268.5,707.0 1266.0,707.0" fill="#a4b840" stroke="#6d7d2a" stroke-width="0.8"/>
<polygon points="798.5,997.6 814.2,943.5 830.6,941.5 838.8,934.6 842.9,936.0 847.0,956.5 864.8,975.7 878.5,984.6 893.6,988.7 899.0,985.3 911.4,980.5 916.8,981.2 920.9,984.6 929.2,979.8 944.2,985.3 959.3,977.7 964.7,969.5 968.8,981.2 974.3,989.4 985.3,991.4 997.6,990.1 1004.4,992.8 1005.1,997.6" fill="none" stroke="#b8b8b8" stroke-width="1"/>
<polyline points="393.6,867.8 633.0,867.8 646.6,888.5 646.6,995.5" fill="none" stroke="#c8c8c8" stroke-width="1.2"/>
</g></svg>
<!-- legend -->
<div class="abs sw" style="top:773px;background:#f1f4e6"></div>
<div class="abs sw" style="top:804px;background:#e3eacb"></div>
<div class="abs sw" style="top:835px;background:#c8d68e"></div>
<div class="abs sw" style="top:866px;background:#a4b840;border-color:#a4b840"></div>
<div class="abs sw" style="top:897px;background:#6e7d2c;border-color:#6e7d2c"></div>
<div class="abs sw" style="top:928px;background:#434d1b;border-color:#434d1b"></div>
<div class="abs sw" style="top:960px;background:#161914;border-color:#161914"></div>
<div class="abs legtxt" style="top:773px">0,006 - 0,017</div>
<div class="abs legtxt" style="top:804px">0,018 - 0,027</div>
<div class="abs legtxt" style="top:835px">0,028 - 0,04</div>
<div class="abs legtxt" style="top:866px">0,041 - 0,043</div>
<div class="abs legtxt" style="top:897px">0,044 - 0,05</div>
<div class="abs legtxt" style="top:928px">0,051 - 0,1</div>
<div class="abs legtxt" style="top:960px">0,101 - 0,147</div>
<!-- bottom icons -->
<svg class="abs" style="left:160px;top:1027px" width="70" height="26" viewBox="0 0 70 26">
 <path d="M2.5 24 V4 Q2.5 2.5 4 2.5 H20 Q21.5 2.5 21.5 4 V24" fill="none" stroke="#4f7f34" stroke-width="1.2"/>
 <path d="M43.5 24 V4 Q43.5 2.5 45 2.5 H61 Q62.5 2.5 62.5 4 V24" fill="none" stroke="#4f7f34" stroke-width="1.2"/>
 <text x="12.3" y="21.6" font-size="20" font-weight="bold" font-style="italic" fill="#4a7a30" text-anchor="middle" font-family="Liberation Serif">i</text>
 <path d="M49 9.5 L45.5 13 L49 16.5 M51.5 19 L55 7.5 M57.5 9.5 L61 13 L57.5 16.5" fill="none" stroke="#5a7a48" stroke-width="1.1"/>
</svg>
<div class="abs" style="left:1501px;top:1039.5px;width:86px;height:9px;display:flex">
 <div style="flex:1;background:#b40000"></div><div style="flex:1;background:#6b86c0"></div><div style="flex:1;background:#6cd67a"></div><div style="flex:1;background:#fdfd55"></div><div style="flex:1;background:#fd9a00"></div><div style="flex:1;background:#fdc090"></div><div style="flex:1;background:#0ecbc2"></div><div style="flex:1;background:#d8d8f8"></div>
</div>
</body></html>
